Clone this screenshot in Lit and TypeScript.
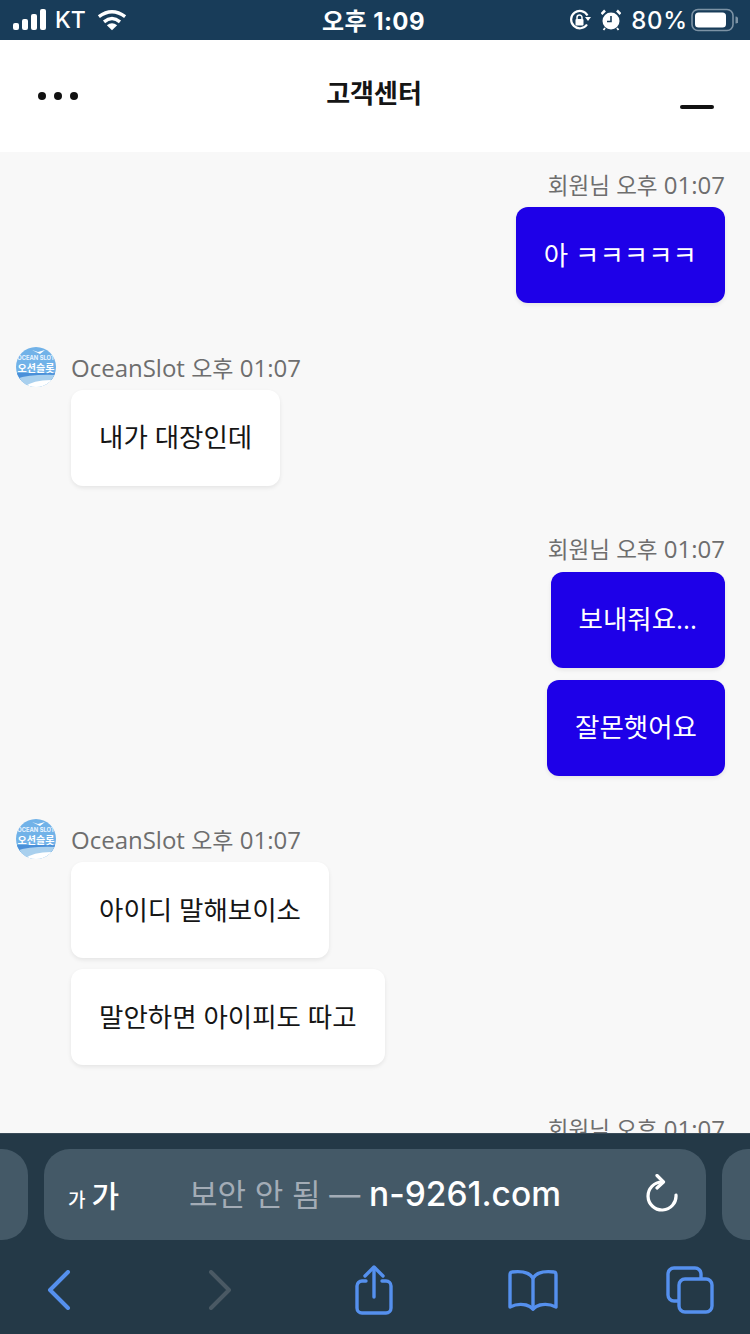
import { LitElement, css, html, svg } from 'lit';
import { customElement } from 'lit/decorators.js';

type Group = { from: 'me' | 'bot'; name: string; msgs: string[] };

const groups: Group[] = [
  { from: 'me', name: '회원님', msgs: ['아 ㅋㅋㅋㅋㅋ'] },
  { from: 'bot', name: 'OceanSlot', msgs: ['내가 대장인데'] },
  { from: 'me', name: '회원님', msgs: ['보내줘요...', '잘몬햇어요'] },
  { from: 'bot', name: 'OceanSlot', msgs: ['아이디 말해보이소', '말안하면 아이피도 따고'] },
  { from: 'me', name: '회원님', msgs: [] },
];

const avatar = svg`
  <svg class="avatar" width="40" height="40" viewBox="0 0 40 40">
    <defs><clipPath id="av"><circle cx="20" cy="20" r="20"/></clipPath></defs>
    <g clip-path="url(#av)">
      <rect width="40" height="40" fill="#71b2e8"/>
      <rect y="26" width="40" height="7" fill="#4a90d9"/>
      <path d="M0 32 Q14 27 40 28 V40 H0 Z" fill="#a9d0ee"/>
      <path d="M8 40 Q18 32 40 33 V40 Z" fill="#fff"/>
      <path d="M16 3 l6 2 l7 -2 l-5 4 l-3 -1.5 z" fill="#fff"/>
      <text x="20" y="13" text-anchor="middle" font-size="5.8" font-weight="700" fill="#e8f4ff" font-family="Inter, sans-serif">OCEAN SLOT</text>
      <text x="20" y="25" text-anchor="middle" font-size="10" font-weight="700" fill="#fff" font-family="'Noto Sans CJK KR', sans-serif">오션슬롯</text>
    </g>
  </svg>`;

@customElement('app-root')
export class AppRoot extends LitElement {
  static styles = css`
    :host {
      display: block;
      width: 750px;
      height: 1334px;
      overflow: hidden;
      font-family: 'Open Sans', 'Noto Sans CJK KR', sans-serif;
    }

    .page {
      display: flex;
      flex-direction: column;
      height: 100%;
    }

    .status {
      flex: 0 0 40px;
      background: #183c59;
      color: #fff;
      display: grid;
      grid-template-columns: 1fr auto 1fr;
      align-items: center;
      padding: 0 12px 0 13px;
      font-family: Inter, 'Noto Sans CJK KR', sans-serif;
      font-size: 24px;
      font-weight: 500;
    }

    .status-left,
    .status-right {
      display: flex;
      align-items: center;
    }

    .status-left {
      gap: 8px;
    }

    .status-left span {
      font-size: 23px;
    }

    .wifi {
      margin-left: 3px;
    }

    .status-right {
      justify-content: flex-end;
      gap: 10px;
    }

    .status-right span {
      letter-spacing: 0.8px;
    }

    .clock {
      font-weight: 700;
      font-size: 24px;
      letter-spacing: 0.4px;
      margin-left: -4px;
      margin-top: -1px;
    }

    .header {
      flex: 0 0 112px;
      background: #fff;
      display: grid;
      grid-template-columns: 1fr auto 1fr;
      align-items: center;
      padding: 0 36px 0 38px;
    }

    .dots {
      display: flex;
      gap: 8px;
    }

    .dots i {
      width: 8px;
      height: 8px;
      border-radius: 50%;
      background: #111;
    }

    .title {
      font-size: 26px;
      font-weight: 700;
      color: #151515;
      margin: 0 4px 10px 0;
      font-family: 'Noto Sans CJK KR', sans-serif;
    }

    .minimize {
      justify-self: end;
      width: 34px;
      height: 4px;
      border-radius: 2px;
      background: #111;
      margin-top: 22px;
    }

    .chat {
      flex: 1;
      min-height: 0;
      overflow: hidden;
      background: #f8f8f8;
      padding: 13px 25px 0 16px;
      display: flex;
      flex-direction: column;
      gap: 44px;
    }

    .group {
      display: flex;
      flex-direction: column;
    }

    .group.me {
      align-items: flex-end;
    }

    .meta {
      display: flex;
      align-items: center;
      box-sizing: border-box;
      height: 42px;
      padding-bottom: 4px;
      font-size: 24px;
      color: #6e6e6e;
      white-space: nowrap;
    }

    .meta .ko {
      font-size: 22.5px;
    }

    .group.bot .meta {
      gap: 15px;
      height: 39.5px;
      padding-bottom: 0;
    }

    .group.bot .meta .ko {
      font-size: 23px;
    }

    .group.bot .stack {
      margin-left: 55px;
      margin-top: 3px;
      gap: 11px;
      align-items: flex-start;
    }

    .avatar {
      flex: none;
    }

    .stack {
      display: flex;
      flex-direction: column;
      gap: 12px;
    }

    .group.me .stack {
      align-items: flex-end;
    }

    .bubble {
      box-sizing: border-box;
      height: 96px;
      display: flex;
      align-items: center;
      padding: 0 28px 4px;
      border-radius: 12px;
      font-size: 26.5px;
      box-shadow: 0 2px 4px rgba(0, 0, 0, 0.08);
      white-space: nowrap;
    }

    .me .bubble {
      background: #1e00e8;
      color: #fff;
    }

    .bot .bubble {
      background: #fff;
      color: #151515;
    }

    .browser {
      flex: 0 0 201px;
      background: #243947;
      border-top: 1px solid #3a4c59;
      display: flex;
      flex-direction: column;
      box-sizing: border-box;
    }

    .tabs {
      display: grid;
      grid-template-columns: 28px 662px 28px;
      justify-content: space-between;
      margin-top: 15px;
      height: 91px;
    }

    .tab-peek,
    .url {
      background: #445967;
    }

    .tab-peek.left {
      border-radius: 0 26px 26px 0;
    }

    .tab-peek.right {
      border-radius: 26px 0 0 26px;
    }

    .url {
      border-radius: 26px;
      display: flex;
      align-items: center;
      padding: 0 28px 0 24px;
      font-family: Inter, 'Noto Sans CJK KR', sans-serif;
    }

    .reload {
      margin-top: -4px;
    }

    .aa {
      color: #fff;
      font-family: 'Noto Sans CJK KR', sans-serif;
      font-weight: 500;
      display: flex;
      align-items: baseline;
      width: 53px;
      margin-top: -2px;
    }

    .aa small {
      font-size: 19px;
    }

    .aa span {
      font-size: 30px;
      margin-left: 6px;
    }

    .address {
      flex: 1;
      text-align: center;
      font-size: 33.5px;
      font-weight: 500;
      color: #fff;
      white-space: nowrap;
      padding-right: 17px;
      margin-top: -4px;
    }

    .address em {
      font-style: normal;
      font-weight: 400;
      font-size: 31px;
      color: #a3acb6;
    }

    .toolbar {
      flex: 1;
      display: grid;
      grid-template-columns: 161px 147px 153px 158px auto;
      align-items: center;
      justify-items: start;
      padding-left: 47px;
      margin-top: 5px;
    }
  `;

  private renderGroup(g: Group) {
    return html`
      <div class="group ${g.from}">
        <div class="meta">
          ${g.from === 'bot' ? avatar : null}
          <span><span class=${g.from === 'me' ? 'ko' : ''}>${g.name}</span> <span class="ko">오후</span> 01:07</span>
        </div>
        <div class="stack">
          ${g.msgs.map((m) => html`<div class="bubble">${m}</div>`)}
        </div>
      </div>
    `;
  }

  render() {
    return html`
      <div class="page">
        <div class="status">
          <div class="status-left">
            <svg width="34" height="22" viewBox="0 0 34 22" fill="#fff">
              <rect x="0" y="14" width="6" height="7" rx="2"/>
              <rect x="9" y="10" width="6" height="11" rx="2"/>
              <rect x="18" y="5" width="6" height="16" rx="2"/>
              <rect x="27" y="0" width="6" height="21" rx="2"/>
            </svg>
            <span>KT</span>
            <svg class="wifi" width="30" height="22" viewBox="0 0 32 22" fill="none" stroke="#fff" stroke-width="3.6">
              <path d="M2 7.5 Q16 -3 30 7.5"/>
              <path d="M7.5 13 Q16 6 24.5 13"/>
              <path d="M16 22 L10.5 16.5 Q16 12.5 21.5 16.5 Z" fill="#fff" stroke="none"/>
            </svg>
          </div>
          <div class="clock">오후 1:09</div>
          <div class="status-right">
            <svg width="22" height="22" viewBox="0 0 22 22" fill="none">
              <path d="M18 15.5 A8.7 8.7 0 1 1 18.5 6.5" stroke="#fff" stroke-width="2.2"/>
              <path d="M16 8 L22 8 L19 12 Z" fill="#fff"/>
              <rect x="6.5" y="10" width="8" height="6.5" rx="1" fill="#fff"/>
              <path d="M8 10 V8.5 a2.5 2.5 0 0 1 5 0 V10" stroke="#fff" stroke-width="1.5"/>
            </svg>
            <svg width="20" height="22" viewBox="0 0 20 22" fill="none">
              <circle cx="10" cy="12" r="8.5" fill="#fff"/>
              <path d="M10 7 V12.5 H6" stroke="#183c59" stroke-width="1.6"/>
              <path d="M0.5 5 L4 1.5 M19.5 5 L16 1.5" stroke="#fff" stroke-width="2.6"/>
              <path d="M4 19 L2.5 21 M16 19 L17.5 21" stroke="#fff" stroke-width="1.8"/>
            </svg>
            <span>80%</span>
            <svg class="battery" width="47" height="24" viewBox="0 0 47 24" fill="none" style="margin-left:-7px">
              <rect x="1" y="1.5" width="41" height="21" rx="6" stroke="#7d93a5" stroke-width="1.6"/>
              <rect x="4" y="4.5" width="31" height="15" rx="3.5" fill="#fff"/>
              <path d="M44.5 8.5 a3 3.5 0 0 1 0 7 Z" fill="#7d93a5"/>
            </svg>
          </div>
        </div>

        <div class="header">
          <div class="dots"><i></i><i></i><i></i></div>
          <div class="title">고객센터</div>
          <div class="minimize"></div>
        </div>

        <div class="chat">${groups.map((g) => this.renderGroup(g))}</div>

        <div class="browser">
          <div class="tabs">
            <div class="tab-peek left"></div>
            <div class="url">
              <div class="aa"><small>가</small><span>가</span></div>
              <div class="address"><em>보안 안 됨 — </em>n-9261.com</div>
              <svg class="reload" width="32" height="38" viewBox="0 0 32 38" fill="none" stroke="#fff" stroke-width="3.2" stroke-linecap="round" stroke-linejoin="round">
                <path d="M16 8 A14 14 0 1 0 30 21"/>
                <path d="M11 1.5 L17.5 8 L11 14"/>
              </svg>
            </div>
            <div class="tab-peek right"></div>
          </div>
          <div class="toolbar">
            <svg width="24" height="40" viewBox="0 0 24 40" fill="none" stroke="#5590ee" stroke-width="4" stroke-linecap="round" stroke-linejoin="round">
              <path d="M21 2 L3 20 L21 38"/>
            </svg>
            <svg width="24" height="40" viewBox="0 0 24 40" fill="none" stroke="#4a5964" stroke-width="4" stroke-linecap="round" stroke-linejoin="round">
              <path d="M3 2 L21 20 L3 38"/>
            </svg>
            <svg width="38" height="50" viewBox="0 0 38 50" fill="none" stroke="#5590ee" stroke-width="3.4" stroke-linecap="round" stroke-linejoin="round">
              <path d="M11 16 H7 A5 5 0 0 0 2 21 V43 A5 5 0 0 0 7 48 H31 A5 5 0 0 0 36 43 V21 A5 5 0 0 0 31 16 H27"/>
              <path d="M19 32 V3"/>
              <path d="M10 11 L19 2 L28 11"/>
            </svg>
            <svg width="50" height="42" viewBox="0 0 50 42" fill="none" stroke="#5590ee" stroke-width="3.4" stroke-linecap="round" stroke-linejoin="round">
              <path d="M25 9 C21 3 12 2 4 3 Q2 3 2 6 V38 Q10 34 18 36 Q22 37 25 40 Q28 37 32 36 Q40 34 48 38 V6 Q48 3 46 3 C38 2 29 3 25 9 Z"/>
              <path d="M25 9 V40"/>
            </svg>
            <svg width="48" height="48" viewBox="0 0 48 48" fill="none" stroke="#5590ee" stroke-width="3.4" stroke-linejoin="round">
              <path d="M12 35 H8 A6 6 0 0 1 2 29 V8 A6 6 0 0 1 8 2 H29 A6 6 0 0 1 35 8 V12"/>
              <rect x="13" y="13" width="33" height="33" rx="6"/>
            </svg>
          </div>
        </div>
      </div>
    `;
  }
}
